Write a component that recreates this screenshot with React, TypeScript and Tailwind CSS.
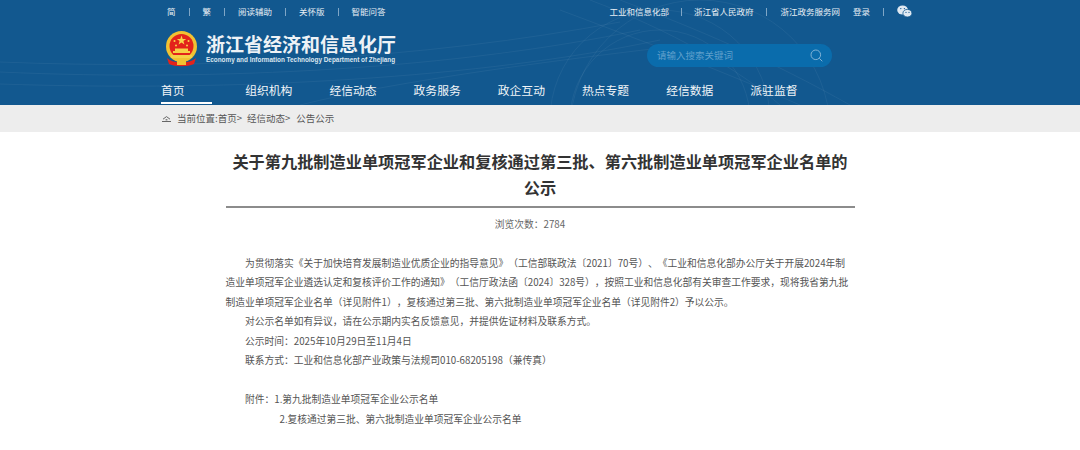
const FONT = "font-['Noto_Sans_CJK_SC','Liberation_Sans',sans-serif]"

const topLeft = ["简", "繁", "阅读辅助", "关怀版", "智能问答"]
const navItems = ["首页", "组织机构", "经信动态", "政务服务", "政企互动", "热点专题", "经信数据", "派驻监督"]

function Sep() {
  return <span className="mx-[13px] h-[8px] w-px bg-[#7fa6c6]" />
}

function Emblem() {
  return (
    <svg width="33" height="36" viewBox="0 0 33 36" className="shrink-0">
      <circle cx="16.5" cy="15.5" r="15.5" fill="#f1c232" />
      <circle cx="16.5" cy="15" r="12" fill="#e3231b" />
      <polygon points="16.5,4.5 17.7,8 21.2,8 18.4,10.1 19.4,13.4 16.5,11.4 13.6,13.4 14.6,10.1 11.8,8 15.3,8" fill="#f8d44a" />
      <circle cx="9.5" cy="10" r="1" fill="#f8d44a" />
      <circle cx="23.5" cy="10" r="1" fill="#f8d44a" />
      <circle cx="11" cy="14.5" r="1" fill="#f8d44a" />
      <circle cx="22" cy="14.5" r="1" fill="#f8d44a" />
      <rect x="8" y="20" width="17" height="2" fill="#f6d046" />
      <rect x="10" y="17.5" width="13" height="3" fill="#f6d046" />
      <rect x="6" y="24" width="21" height="3" fill="#f6d046" />
      <path d="M2 27 C8 33 25 33 31 27 L29 33 C22 36 11 36 4 33 Z" fill="#e3231b" />
      <rect x="12" y="29" width="9" height="5" fill="#f1c232" />
    </svg>
  )
}

function WeChat() {
  return (
    <svg width="15" height="13" viewBox="0 0 15 13" fill="#dfe9f2">
      <ellipse cx="5.6" cy="5" rx="5.4" ry="4.6" />
      <ellipse cx="10.4" cy="8.2" rx="4.5" ry="3.8" stroke="#12588f" strokeWidth="0.8" />
      <circle cx="3.8" cy="3.6" r="0.7" fill="#12588f" />
      <circle cx="7.4" cy="3.6" r="0.7" fill="#12588f" />
      <circle cx="9" cy="7.4" r="0.55" fill="#12588f" />
      <circle cx="12" cy="7.4" r="0.55" fill="#12588f" />
    </svg>
  )
}

function Arcs() {
  return (
    <svg className="absolute inset-0 h-full w-full" viewBox="0 0 1080 105" fill="none" stroke="#ffffff" strokeOpacity="0.05">
      <path d="M0 62 C200 70 420 60 620 22" />
      <path d="M0 72 C220 82 460 68 640 30" />
      <path d="M0 84 C240 92 480 78 660 40" />
      <path d="M300 105 C400 80 560 60 660 48" />
      <circle cx="660" cy="120" r="110" />
      <circle cx="660" cy="120" r="90" />
      <circle cx="700" cy="130" r="130" />
      <path d="M560 10 C640 40 720 70 800 105" />
      <path d="M590 0 C670 30 740 70 780 105" />
      <path d="M620 0 C700 30 770 60 850 105" />
    </svg>
  )
}

export default function App() {
  return (
    <div className={`min-h-[450px] w-[1080px] bg-white ${FONT}`}>
      <header className="relative h-[105px] bg-[#12588f] text-white">
        <Arcs />
        <div className="relative mx-auto flex h-full w-[758px] flex-col">
          <div className="flex h-[23px] items-center justify-between text-[8.5px] text-[#e8eff5]">
            <div className="flex items-center pl-[6px]">
              {topLeft.map((t, i) => (
                <span key={t} className="flex items-center">
                  {i > 0 && <Sep />}
                  {t}
                </span>
              ))}
            </div>
            <div className="flex items-center pr-[7px]">
              <span>工业和信息化部</span>
              <span className="mx-[12px] h-[8px] w-px bg-[#7fa6c6]" />
              <span>浙江省人民政府</span>
              <Sep />
              <span>浙江政务服务网</span>
              <span className="ml-[13px]">登录</span>
              <Sep />
              <WeChat />
            </div>
          </div>
          <div className="flex h-[51px] items-center justify-between pl-[4px] pr-[87px]">
            <div className="flex items-center gap-[8px]">
              <Emblem />
              <div className="flex flex-col">
                <span className="text-[19px] leading-[22px] font-bold text-[#eef2f6]">浙江省经济和信息化厅</span>
                <span className="font-['Liberation_Sans',sans-serif] text-[6.4px] leading-[9px] font-bold whitespace-nowrap text-[#dbe6ef]">
                  Economy and Information Technology Department of Zhejiang
                </span>
              </div>
            </div>
            <div className="mt-[14px] flex h-[23px] w-[185px] items-center justify-between rounded-full bg-[#0a6cac] pr-[9px] pl-[10px]">
              <span className="text-[9.5px] text-[#5f9fcb]">请输入搜索关键词</span>
              <svg width="13" height="13" viewBox="0 0 13 13" fill="none" stroke="#7fb2d6" strokeWidth="1">
                <circle cx="5.8" cy="5.8" r="4.8" />
                <path d="M9.3 9.3L12.3 12.3" />
              </svg>
            </div>
          </div>
          <nav className="flex h-[31px]">
            {navItems.map((n, i) => (
              <a key={n} className="flex h-full w-[84.2px] flex-col">
                <span className="mt-[7px] text-[11.8px] leading-[18px] text-[#f1f5f8]">{n}</span>
                {i === 0 && <span className="mt-[3px] h-[2px] w-[51px] bg-white" />}
              </a>
            ))}
          </nav>
        </div>
      </header>

      <div className="h-[27px] bg-[#ededed]">
        <div className="mx-auto flex h-full w-[758px] items-center text-[9.5px] text-[#555555]">
          <svg width="9" height="6" viewBox="0 0 9 6" className="mt-[1px] mr-[6px] ml-[1px]" fill="none" stroke="#666666">
            <path d="M1 3.2L4.5 0.6L8 3.2" />
            <path d="M3.6 3.2H5.4V4.4H3.6Z" fill="#666666" stroke="none" />
            <path d="M0 5.5H9" />
          </svg>
          <span>当前位置:首页&gt;</span>
          <span className="ml-[5px]">经信动态&gt;</span>
          <span className="ml-[6px]">公告公示</span>
        </div>
      </div>

      <main className="mx-auto w-[629px] pt-[16px] [text-spacing-trim:space-all]">
        <h1 className="border-b-2 border-[#8c8c8c] pb-[6px] text-center text-[16.2px] leading-[26px] font-bold text-[#333333]">
          关于第九批制造业单项冠军企业和复核通过第三批、第六批制造业单项冠军企业名单的公示
        </h1>
        <p className="mt-[7px] pr-[20px] text-center text-[9.75px] leading-[19.5px] text-[#666666]">浏览次数&#xFF1A;2784</p>
        <div className="mt-[19px] text-[9.75px] leading-[19.5px] text-[#555555]">
          <p className="indent-[19.5px]">
            为贯彻落实《关于加快培育发展制造业优质企业的指导意见》&#xFF08;工信部联政法〔2021〕70号&#xFF09;、《工业和信息化部办公厅关于开展2024年制造业单项冠军企业遴选认定和复核评价工作的通知》&#xFF08;工信厅政法函〔2024〕328号&#xFF09;&#xFF0C;按照工业和信息化部有关审查工作要求&#xFF0C;现将我省第九批制造业单项冠军企业名单&#xFF08;详见附件1&#xFF09;&#xFF0C;复核通过第三批、第六批制造业单项冠军企业名单&#xFF08;详见附件2&#xFF09;予以公示。
          </p>
          <p className="indent-[19.5px]">对公示名单如有异议&#xFF0C;请在公示期内实名反馈意见&#xFF0C;并提供佐证材料及联系方式。</p>
          <p className="indent-[19.5px]">公示时间&#xFF1A;2025年10月29日至11月4日</p>
          <p className="indent-[19.5px]">联系方式&#xFF1A;工业和信息化部产业政策与法规司010-68205198&#xFF08;兼传真&#xFF09;</p>
          <p className="mt-[19.5px] indent-[19.5px]">附件&#xFF1A;1.第九批制造业单项冠军企业公示名单</p>
          <p className="indent-[54px]">2.复核通过第三批、第六批制造业单项冠军企业公示名单</p>
        </div>
      </main>
    </div>
  )
}
